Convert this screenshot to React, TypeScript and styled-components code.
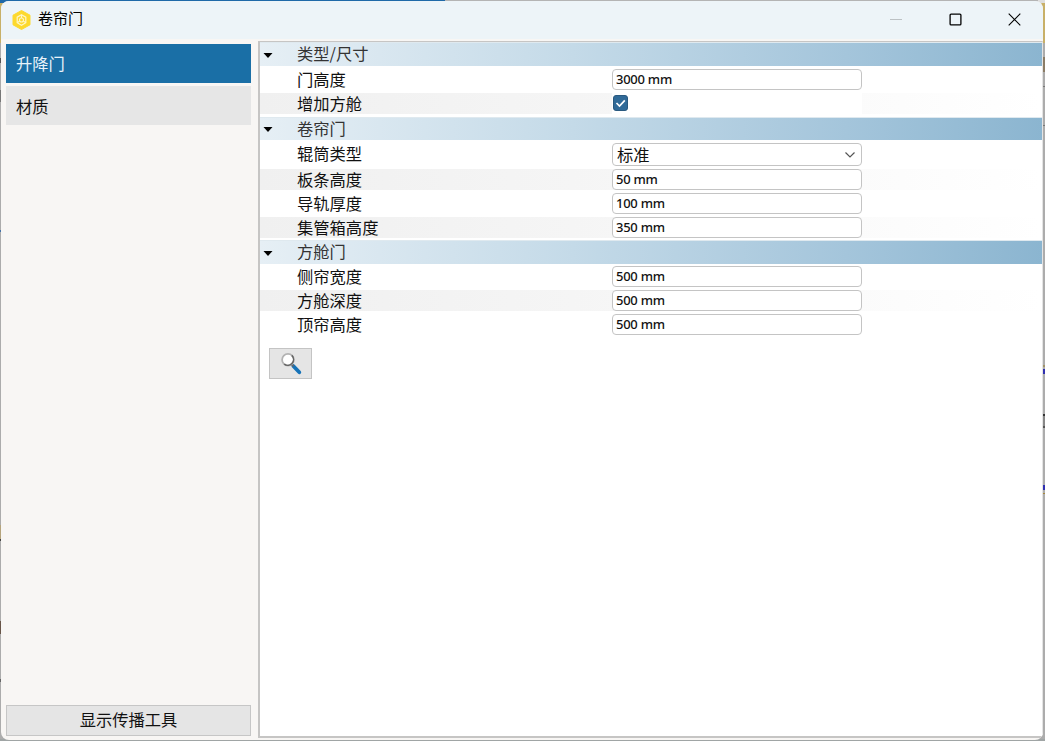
import React from 'react';
import styled, { createGlobalStyle } from 'styled-components';

const Global = createGlobalStyle`
  * { box-sizing: border-box; }
  html, body { margin: 0; height: 100%; overflow: hidden; }
  body { font-family: "Noto Sans CJK SC", sans-serif; color: #111; }
  button { font: inherit; color: inherit; padding: 0; }
`;

const Desktop = styled.div`
  width: 1045px;
  height: 741px;
  padding: 1px 2px 1px 1px;
  position: relative;
  background: linear-gradient(#c8b068 0 43px, #acacac 43px 739px, #a0a5a5 739px);
`;

const TopEdge = styled.div`
  position: absolute;
  inset: 0 0 auto 0;
  height: 3px;
  background: linear-gradient(90deg, #1f69a8 0 445px, #b4b4b4 445px 1038px, #dedede 1038px);
`;

const EdgeMark = styled.i<{ $side: 'left' | 'right'; $top: number; $height: number; $color: string }>`
  position: absolute;
  ${p => p.$side}: 0;
  top: ${p => p.$top}px;
  width: ${p => (p.$side === 'left' ? 1 : 2)}px;
  height: ${p => p.$height}px;
  background: ${p => p.$color};
`;

const Window = styled.div`
  position: relative;
  display: flex;
  flex-direction: column;
  height: 739px;
  border-radius: 8px;
  overflow: hidden;
  background: #f8f6f4;
`;

const TitleBar = styled.header`
  flex: none;
  display: flex;
  align-items: center;
  height: 38px;
  padding-left: 11px;
  background: #edf4f8;
`;

const Title = styled.h1`
  flex: 1;
  margin: 0 0 4px 7px;
  font-size: 15px;
  font-weight: 400;
  line-height: 20px;
  color: #000;
`;

const WindowControl = styled.button`
  display: flex;
  align-items: center;
  justify-content: center;
  width: 59px;
  height: 38px;
  padding: 0 0 1px 2px;
  border: 0;
  background: none;
`;

const Content = styled.div`
  flex: 1;
  display: flex;
  min-height: 0;
  padding: 2px 0 2px 5px;
`;

const Sidebar = styled.nav`
  display: flex;
  flex-direction: column;
  width: 245px;
  padding: 3px 0 2px;
  margin-right: 7px;
`;

const Tab = styled.button<{ $active?: boolean }>`
  flex: none;
  height: 39px;
  margin-bottom: 3px;
  padding: 0 0 0 10px;
  border: 0;
  text-align: left;
  font-size: 16.3px;
  line-height: ${p => (p.$active ? 39 : 41)}px;
  background: ${p => (p.$active ? '#1a6fa6' : '#e6e6e6')};
  color: ${p => (p.$active ? '#e9f3fa' : '#111')};
`;

const ToolButton = styled.button`
  margin-top: auto;
  height: 31px;
  padding-bottom: 3px;
  border: 1px solid #c6c6c6;
  background: #e5e5e5;
  font-size: 16.3px;
  line-height: 26px;
`;

const Panel = styled.main`
  flex: 1;
  border: solid #c6c5c4;
  border-width: 1px 1px 2px 2px;
  border-right-color: #e4e4e4;
  background: #fff;
`;

const SectionHeader = styled.h2<{ $height: number }>`
  display: flex;
  align-items: center;
  height: ${p => p.$height}px;
  margin: 0;
  padding: 0 0 3px 3px;
  border-top: 1px solid #dfe9ef;
  background: linear-gradient(90deg, #e6eff5 0%, #c4dae8 40%, #a4c5db 75%, #8bb5d0 100%);
  font-size: 16.3px;
  font-weight: 400;
  line-height: 20px;
  color: #333;
`;

const Arrow = styled.svg`
  width: 10px;
  height: 5px;
  margin: 4px 24px 0 0;
`;

const Rows = styled.div<{ $top: number; $bottom: number }>`
  display: grid;
  gap: 3px;
  padding: ${p => p.$top}px 0 ${p => p.$bottom}px;
`;

const Row = styled.div<{ $striped?: boolean; $height: number }>`
  display: grid;
  grid-template-columns: 352px 250px 1fr;
  height: ${p => p.$height}px;
  background: ${p => (p.$striped ? 'linear-gradient(90deg, #f0f0f0, #f5f5f5 40%, #fbfbfb 76%, #fff)' : '#fff')};
`;

const Label = styled.label`
  padding-left: 37px;
  font-size: 16.3px;
  line-height: 21px;
  height: 21px;
`;

const Field = styled.div`
  height: 21px;
  padding-left: 3px;
  border: 1px solid #c4c4c4;
  border-radius: 4px;
  background: #fff;
  font: 500 13px/18px "Noto Sans", sans-serif;
  letter-spacing: -0.25px;
`;

const Select = styled.div`
  display: flex;
  align-items: center;
  justify-content: space-between;
  height: 23px;
  padding: 0 5px 2px 4px;
  border: 1px solid #c4c4c4;
  border-radius: 4px;
  font-size: 16.3px;
  line-height: 18px;
`;

const Chevron = styled.svg`
  width: 12px;
  height: 8px;
  margin-top: 2px;
`;

const CheckCell = styled.div`
  padding: 2px 0 0 1px;
  background: #fff;
`;

const CheckBox = styled.svg`
  display: block;
  width: 15px;
  height: 16px;
`;

const SearchButton = styled.button`
  display: flex;
  align-items: center;
  justify-content: center;
  width: 43px;
  height: 31px;
  margin: 13px 0 0 9px;
  padding-bottom: 1px;
  border: 1px solid #c4c4c4;
  background: #e5e5e5;
`;

type Item = { label: string; value?: string; kind?: 'select' | 'check'; striped?: boolean };
type Group = { title: string; height: number; top: number; bottom: number; items: Item[] };

const groups: Group[] = [
  {
    title: '类型/尺寸', height: 24, top: 3, bottom: 3,
    items: [
      { label: '门高度', value: '3000 mm' },
      { label: '增加方舱', kind: 'check', striped: true },
    ],
  },
  {
    title: '卷帘门', height: 23, top: 3, bottom: 2,
    items: [
      { label: '辊筒类型', value: '标准', kind: 'select' },
      { label: '板条高度', value: '50 mm', striped: true },
      { label: '导轨厚度', value: '100 mm' },
      { label: '集管箱高度', value: '350 mm', striped: true },
    ],
  },
  {
    title: '方舱门', height: 24, top: 2, bottom: 0,
    items: [
      { label: '侧帘宽度', value: '500 mm' },
      { label: '方舱深度', value: '500 mm', striped: true },
      { label: '顶帘高度', value: '500 mm' },
    ],
  },
];

const marks: [('left' | 'right'), number, number, string][] = [
  ['left', 58, 5, '#555'], ['left', 90, 12, '#777'], ['left', 230, 2, '#4472a8'],
  ['left', 525, 15, '#b5a47c'], ['left', 539, 2, '#444'], ['left', 621, 13, '#685548'], ['left', 679, 3, '#666'],
  ['right', 57, 15, '#8b7c66'], ['right', 86, 1, '#777'], ['right', 125, 1, '#777'],
  ['right', 365, 2, '#a19368'], ['right', 369, 5, '#3030b0'],
  ['right', 414, 2, '#333'], ['right', 416, 10, '#888'], ['right', 426, 2, '#555'],
  ['right', 485, 5, '#3030b0'], ['right', 493, 1, '#a8883c'],
];

function Logo() {
  return (
    <svg width="19" height="20" viewBox="0 0 19 20">
      <path d="M9.5.5 18 5.2v9.6l-8.5 4.7L1 14.8V5.2z" fill="#fdd92e" stroke="#fdd92e" strokeLinejoin="round" />
      <path d="M9.5 4.8 13.8 7.2v5.5L9.5 15.2l-4.3-2.5V7.2z" fill="none" stroke="#fff6c6" strokeWidth="1.2" />
      <path d="M9.5 5v3M5.4 12.6l2.2-1.3M13.6 12.6l-2.2-1.3" stroke="#fff6c6" strokeWidth="1.2" />
      <circle cx="9.5" cy="10" r="2" fill="none" stroke="#fff6c6" strokeWidth="1.1" />
    </svg>
  );
}

function Magnifier() {
  return (
    <svg width="22" height="24" viewBox="0 0 22 24">
      <path d="m13.3 15 6 6.3" stroke="#1673b8" strokeWidth="3.8" strokeLinecap="round" />
      <path d="m11.5 13.2 2 2" stroke="#666" strokeWidth="2" />
      <circle cx="8" cy="8.7" r="5.9" fill="#fff" stroke="#b2b2b2" strokeWidth="1.8" />
      <path d="M11.8 4.4a5.8 5.8 0 0 1-7.5 8.8" fill="none" stroke="#646464" strokeWidth="1.5" />
    </svg>
  );
}

function Control({ item }: { item: Item }) {
  if (item.kind === 'select') {
    return (
      <Select>
        {item.value}
        <Chevron viewBox="0 0 12 8"><path d="m1.5 1.5 4.5 4.5 4.5-4.5" fill="none" stroke="#555" strokeWidth="1.2" /></Chevron>
      </Select>
    );
  }
  if (item.kind === 'check') {
    return (
      <CheckCell>
        <CheckBox viewBox="0 0 15 16">
          <rect x=".5" y=".5" width="14" height="15" rx="2.5" fill="#306a98" stroke="#29597f" />
          <path d="m3.5 8 3 3 5.3-5.7" fill="none" stroke="#fff" strokeWidth="1.7" />
        </CheckBox>
      </CheckCell>
    );
  }
  return <Field>{item.value}</Field>;
}

export default function App() {
  return (
    <>
      <Global />
      <Desktop>
        <TopEdge />
        {marks.map(([side, top, height, color]) => (
          <EdgeMark key={side + top} $side={side} $top={top} $height={height} $color={color} />
        ))}
        <Window>
          <TitleBar>
            <Logo />
            <Title>卷帘门</Title>
            <WindowControl aria-label="最小化">
              <svg width="13" height="13"><path d="M0 6.5h12" stroke="#bcc1c4" /></svg>
            </WindowControl>
            <WindowControl aria-label="最大化">
              <svg width="13" height="13"><rect x="1.1" y="1.1" width="10.8" height="10.8" rx="1" fill="none" stroke="#000" strokeWidth="1.3" /></svg>
            </WindowControl>
            <WindowControl aria-label="关闭">
              <svg width="13" height="13"><path d="m.7.7 11.6 11.6M12.3.7.7 12.3" stroke="#000" strokeWidth="1.1" /></svg>
            </WindowControl>
          </TitleBar>
          <Content>
            <Sidebar>
              <Tab $active>升降门</Tab>
              <Tab>材质</Tab>
              <ToolButton>显示传播工具</ToolButton>
            </Sidebar>
            <Panel>
              {groups.map(g => (
                <section key={g.title}>
                  <SectionHeader $height={g.height}>
                    <Arrow viewBox="0 0 10 5"><path d="M.5 0h9L5 5z" fill="#000" /></Arrow>
                    {g.title}
                  </SectionHeader>
                  <Rows $top={g.top} $bottom={g.bottom}>
                    {g.items.map(item => (
                      <Row key={item.label} $striped={item.striped} $height={item.kind === 'select' ? 23 : 21}>
                        <Label>{item.label}</Label>
                        <Control item={item} />
                      </Row>
                    ))}
                  </Rows>
                </section>
              ))}
              <SearchButton aria-label="搜索"><Magnifier /></SearchButton>
            </Panel>
          </Content>
        </Window>
      </Desktop>
    </>
  );
}
